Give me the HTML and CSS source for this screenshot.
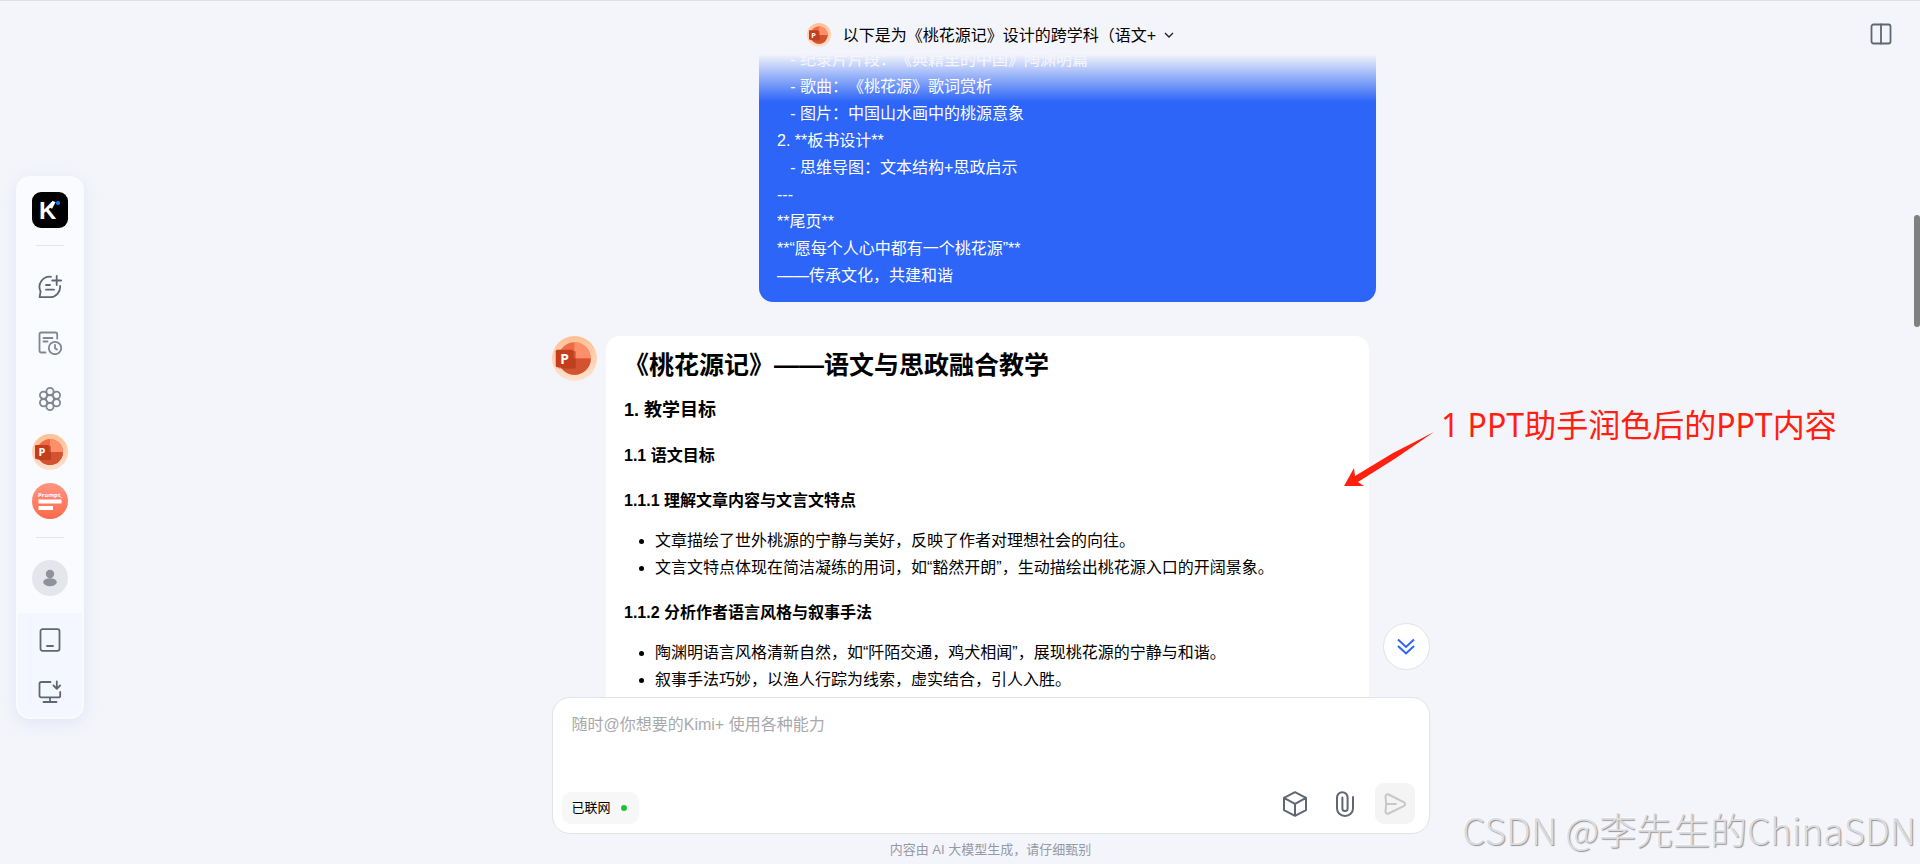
FILE: index.html
```html
<!DOCTYPE html>
<html lang="zh-CN">
<head>
    <meta charset="UTF-8">
    <title>Kimi</title>
    <link rel="stylesheet" href="styles.css">
</head>
<body>
    <svg class="defs" width="0" height="0" aria-hidden="true">
        <defs>
            <linearGradient id="peach" x1="0" y1="0" x2="0" y2="1">
                <stop offset="0" stop-color="#ffc092"/>
                <stop offset="1" stop-color="#ffe2cf"/>
            </linearGradient>
            <linearGradient id="coral" x1="0" y1="0" x2="0" y2="1">
                <stop offset="0" stop-color="#ff9580"/>
                <stop offset="1" stop-color="#ff6a4b"/>
            </linearGradient>
            <symbol id="ppt" viewBox="0 0 36 36">
                <circle cx="18" cy="18" r="18" fill="url(#peach)"/>
                <circle cx="18" cy="18" r="13" fill="#ed6c47"/>
                <path d="M18 5a13 13 0 0 1 13 13H18z" fill="#ff8f6b"/>
                <path d="M5 18h26a13 13 0 0 1-26 0z" fill="#d35230"/>
                <rect x="5" y="12" width="14" height="14" rx="1" fill="#9e3017" opacity=".5"/>
                <rect x="3" y="11" width="14" height="14" rx="1.2" fill="#c43e1c"/>
                <text x="10" y="22" class="ppt-letter">P</text>
            </symbol>
        </defs>
    </svg>

    <nav class="sidebar">
        <a href="#" class="item logo" aria-label="Kimi">
            <svg width="36" height="36" viewBox="0 0 36 36">
                <rect width="36" height="36" rx="9"/>
                <text x="7" y="27" class="logo-letter">K</text>
                <path d="M22 8h9v7h-9z"/>
                <path d="M18.500 16l3.500-6.500" stroke="#fff" stroke-width="3.500"/>
                <rect x="24" y="9" width="4" height="4" rx="1.800" fill="#0a7cff"/>
            </svg>
        </a>
        <hr>
        <button class="item icon" aria-label="新建会话">
            <svg width="24" height="24" viewBox="0 0 24 24">
                <path d="M13 1.800A10.200 10.200 0 0 0 2.600 16.500L1.600 22.200H12A10.200 10.200 0 0 0 22.100 11M18.700 1v9M14.200 5.500h9M8 10h4M8 14.700h8"/>
            </svg>
        </button>
        <button class="item icon light" aria-label="历史会话">
            <svg width="24" height="24" viewBox="0 0 24 24">
                <path d="M7.500 21.500H3.200a1.700 1.700 0 0 1-1.700-1.700V3.200A1.700 1.700 0 0 1 3.200 1.500h14.300a1.700 1.700 0 0 1 1.700 1.700V7.500M5.500 7h9M5.500 10.500h4"/>
                <circle cx="17" cy="17" r="6.200"/>
                <path d="M17 13.800V17.200l2 1.400"/>
            </svg>
        </button>
        <button class="item icon light" aria-label="Kimi+">
            <svg width="24" height="24" viewBox="0 0 24 24">
                <circle cx="12" cy="12" r="3.900"/>
                <circle cx="12" cy="4.500" r="3.600"/>
                <circle cx="18.500" cy="8.200" r="3.600"/>
                <circle cx="18.500" cy="15.800" r="3.600"/>
                <circle cx="12" cy="19.500" r="3.600"/>
                <circle cx="5.500" cy="15.800" r="3.600"/>
                <circle cx="5.500" cy="8.200" r="3.600"/>
            </svg>
        </button>
        <a href="#" class="item round" aria-label="PPT助手"><svg width="36" height="36"><use href="#ppt"/></svg></a>
        <a href="#" class="item round" aria-label="提示词专家">
            <svg width="36" height="36" viewBox="0 0 36 36">
                <circle cx="18" cy="18" r="18" fill="url(#coral)"/>
                <text x="6" y="14" class="prompt-word">Prompt_</text>
                <path d="M6.500 16.500h23v4h-23zM6.500 23h14.500v4H6.500z" fill="#fff"/>
            </svg>
        </a>
        <hr class="second">
        <button class="item user" aria-label="用户">
            <svg width="36" height="36" viewBox="0 0 36 36">
                <circle cx="18" cy="18" r="18" fill="#e5e6eb"/>
                <circle cx="18" cy="14" r="4.200" fill="#8f919b"/>
                <ellipse cx="18" cy="22.200" rx="6.700" ry="4" fill="#8f919b"/>
            </svg>
        </button>
        <div class="downloads">
            <button class="item icon" aria-label="手机应用">
                <svg width="24" height="24" viewBox="0 0 24 24">
                    <rect x="2.500" y="1.200" width="19" height="21.600" rx="2"/>
                    <path d="M9 18h6"/>
                </svg>
            </button>
            <button class="item icon" aria-label="桌面应用">
                <svg width="24" height="24" viewBox="0 0 24 24">
                    <path d="M12.500 2H3.200A1.700 1.700 0 0 0 1.500 3.700v12a1.700 1.700 0 0 0 1.700 1.700h17.300a1.700 1.700 0 0 0 1.700-1.700V12M12 17.500V22M5.500 22h13M18.800 1.500v7M15.500 5.500l3.300 3.300 3.300-3.300"/>
                </svg>
            </button>
        </div>
    </nav>

    <div class="main">
        <header class="topbar">
            <button class="title">
                <svg width="24" height="24"><use href="#ppt"/></svg>
                <span>以下是为《桃花源记》设计的跨学科（语文+</span>
                <svg width="10" height="10" viewBox="0 0 10 10" class="chevron"><path d="M1 3l4 4 4-4"/></svg>
            </button>
            <button class="panel icon" aria-label="侧边栏">
                <svg width="22" height="22" viewBox="0 0 22 22">
                    <rect x="1.500" y="1.500" width="19" height="19" rx="2"/>
                    <path d="M11 1.500v19"/>
                </svg>
            </button>
        </header>

        <main class="chat">
            <div class="messages">
                <div class="bubble">   - 纪录片片段：《典籍里的中国》陶渊明篇
   - 歌曲：《桃花源》歌词赏析
   - 图片：中国山水画中的桃源意象
2. **板书设计**
   - 思维导图：文本结构+思政启示
---
**尾页**
**“愿每个人心中都有一个桃花源”**
——传承文化，共建和谐</div>
                <div class="reply">
                    <svg class="avatar" width="45" height="45"><use href="#ppt"/></svg>
                    <article class="card">
                        <h1>《桃花源记》——语文与思政融合教学</h1>
                        <h2>1. 教学目标</h2>
                        <h3>1.1 语文目标</h3>
                        <h4>1.1.1 理解文章内容与文言文特点</h4>
                        <ul>
                            <li>文章描绘了世外桃源的宁静与美好，反映了作者对理想社会的向往。</li>
                            <li>文言文特点体现在简洁凝练的用词，如“豁然开朗”，生动描绘出桃花源入口的开阔景象。</li>
                        </ul>
                        <h4>1.1.2 分析作者语言风格与叙事手法</h4>
                        <ul>
                            <li>陶渊明语言风格清新自然，如“阡陌交通，鸡犬相闻”，展现桃花源的宁静与和谐。</li>
                            <li>叙事手法巧妙，以渔人行踪为线索，虚实结合，引人入胜。</li>
                        </ul>
                    </article>
                </div>
            </div>
        </main>

        <div class="bottom">
            <button class="to-bottom" aria-label="回到底部">
                <svg width="20" height="20" viewBox="0 0 20 20"><path d="M2 2.500l8 7.500 8-7.500M2 9l8 7.500L18 9"/></svg>
            </button>
            <form class="composer">
                <textarea rows="2" aria-label="输入消息" placeholder="随时@你想要的Kimi+ 使用各种能力"></textarea>
                <div class="tools">
                    <button type="button" class="online">已联网<i></i></button>
                    <button type="button" class="icon tool" aria-label="工具箱">
                        <svg width="26" height="26" viewBox="0 0 26 26">
                            <path d="M13 1.200L24 6.800v12.400L13 24.800 2 19.200V6.800zM2 6.800l11 6 11-6M13 12.800v12"/>
                        </svg>
                    </button>
                    <button type="button" class="icon tool" aria-label="附件">
                        <svg width="26" height="26" viewBox="0 0 26 26">
                            <path d="M21 6v11.500a8 7.500 0 0 1-16 0V6.500a5.300 5.300 0 0 1 10.600 0V17.500a2.600 2.600 0 0 1-5.200 0V6.500"/>
                        </svg>
                    </button>
                    <button class="send" aria-label="发送" disabled>
                        <svg width="24" height="24" viewBox="0 0 24 24">
                            <path d="M2.500 4.500a2.200 2.200 0 0 1 3.100-2l15.500 7.800a2 2 0 0 1 0 3.500L5.600 21.500a2.200 2.200 0 0 1-3.100-2Q3.800 12 2.500 4.500zM3.500 12H13"/>
                        </svg>
                    </button>
                </div>
            </form>
            <p class="notice">内容由 AI 大模型生成，请仔细甄别</p>
        </div>
    </div>

    <div class="note">
        <svg width="90" height="55" viewBox="0 0 90 55"><path d="M90 0L52 26 14 50l6 4H0L10 36l1 8L49 21z"/></svg>
        <span>1 PPT助手润色后的PPT内容</span>
    </div>
    <div class="scrollbar"></div>
    <div class="watermark">CSDN @李先生的ChinaSDN</div>
</body>
</html>
```

FILE: styles.css
```css
*{
    margin: 0;
    padding: 0;
    box-sizing: border-box;
}
body{
    display: flex;
    height: 100vh;
    overflow: hidden;
    position: relative;
    border-top: 1px solid #e0e0e2;
    background: #f4f5fa;
    color: #000;
    font: 16px/27px "Liberation Sans", "Noto Sans CJK SC", sans-serif;
    text-spacing-trim: space-all;
}
button{
    border: none;
    background: none;
    font: inherit;
    color: inherit;
    cursor: pointer;
}
svg{
    display: block;
    flex: none;
}
.defs{
    position: absolute;
}
.icon svg{
    fill: none;
    stroke: #5f6773;
    stroke-width: 1.8;
    stroke-linecap: round;
    stroke-linejoin: round;
}
.icon.light svg{
    stroke: #818792;
}

/* sidebar */
.sidebar{
    display: flex;
    flex-direction: column;
    align-items: center;
    align-self: center;
    flex: none;
    width: 68px;
    margin: 30px 0 0 16px;
    padding-top: 16px;
    border-radius: 14px;
    background: #fafbff;
    box-shadow: 0 4px 16px rgba(90, 120, 220, .12);
}
.item{
    display: flex;
    align-items: center;
    justify-content: center;
    width: 36px;
    height: 36px;
}
.sidebar hr{
    width: 28px;
    height: 1px;
    margin: 17px 0 23px;
    border: none;
    background: #e4e5ea;
}
.sidebar .icon{
    margin-bottom: 20px;
}
.sidebar .light + .round{
    margin-top: -3px;
}
.sidebar .round{
    margin-bottom: 13px;
}
.sidebar .second{
    margin: 5px 0 22px;
}
.downloads{
    display: flex;
    flex-direction: column;
    align-items: center;
    align-self: stretch;
    gap: 16px;
    margin: 17px 2px 2px;
    padding: 9px 0 7px;
    border-radius: 0 0 12px 12px;
    background: #f4f7ff;
}
.downloads .icon{
    margin: 0;
}
.ppt-letter{
    font: bold 11px "Open Sans", sans-serif;
    fill: #fff;
    text-anchor: middle;
}
.logo-letter{
    font: bold 24px "Liberation Sans", sans-serif;
    fill: #fff;
}
.prompt-word{
    font: bold 6px "Open Sans", sans-serif;
    fill: #fff;
}

/* main column */
.main{
    display: flex;
    flex-direction: column;
    flex: 1;
    min-width: 0;
    padding-right: 23px;
}
.topbar{
    display: flex;
    align-items: center;
    justify-content: center;
    flex: none;
    height: 53px;
    padding-top: 14px;
    position: relative;
    z-index: 1;
}
.topbar:after{
    content: "";
    position: absolute;
    top: 100%;
    left: 0;
    right: 0;
    height: 48px;
    background: linear-gradient(#f4f5fa, rgba(244, 245, 250, 0));
}
.title{
    display: flex;
    align-items: center;
    gap: 8px;
}
.title span{
    margin-left: 4px;
    padding-top: 2px;
}
.chevron{
    fill: none;
    stroke: #222;
    stroke-width: 1.4;
}
.panel{
    position: absolute;
    right: 5px;
    top: 22px;
}
.chat{
    flex: 1;
    min-height: 0;
    overflow: hidden;
}
.messages{
    width: 100%;
    max-width: 877px;
    margin: -8px auto 0;
}
.bubble{
    width: 617px;
    max-width: 90%;
    margin: 0 53px 34px auto;
    padding: 0 18px 13px;
    border-radius: 0 0 14px 14px;
    background: #2d65f8;
    color: #fff;
    white-space: pre-wrap;
}
.reply{
    display: flex;
    align-items: flex-start;
    gap: 9px;
    padding-right: 60px;
}
.card{
    flex: 1;
    padding: 11px 18px 40px;
    border-radius: 14px 14px 0 0;
    background: #fff;
}
.card h1{
    margin-bottom: 14px;
    font-size: 25px;
    line-height: 36px;
}
.card h2{
    margin-bottom: 18px;
    font-size: 18px;
}
.card h3{
    margin-bottom: 18px;
    font-size: 16px;
}
.card h4{
    margin-bottom: 13px;
    font-size: 16px;
}
.card ul{
    margin-bottom: 18px;
    padding-left: 31px;
}

/* composer */
.bottom{
    flex: none;
    width: 100%;
    max-width: 878px;
    margin: 0 auto;
    position: relative;
}
.to-bottom{
    display: flex;
    align-items: center;
    justify-content: center;
    position: absolute;
    right: 0;
    bottom: 100%;
    width: 47px;
    height: 47px;
    margin-bottom: 27px;
    border: 1px solid #e2e3e6;
    border-radius: 50%;
    background: #fff;
}
.to-bottom svg{
    fill: none;
    stroke: #2d65f8;
    stroke-width: 2;
}
.composer{
    padding: 13px 14px 9px 9px;
    border: 1px solid #e2e3e6;
    border-radius: 18px;
    background: #fff;
}
.composer textarea{
    display: block;
    width: 100%;
    height: 72px;
    padding: 0 10px;
    border: none;
    outline: none;
    resize: none;
    background: none;
    font: inherit;
}
.composer textarea::placeholder{
    color: #a9a9ab;
    opacity: 1;
}
.tools{
    display: flex;
    align-items: center;
    gap: 24px;
}
.online{
    display: flex;
    align-items: center;
    gap: 10px;
    height: 32px;
    margin: 8px auto 0 0;
    padding: 0 12px 0 10px;
    border-radius: 9px;
    background: #f7f7f7;
    font-size: 13px;
}
.online i{
    width: 6px;
    height: 6px;
    border-radius: 50%;
    background: #1ec337;
}
.tool svg{
    stroke-width: 2;
}
.send{
    display: flex;
    align-items: center;
    justify-content: center;
    width: 40px;
    height: 41px;
    margin-left: -7px;
    border-radius: 9px;
    background: #f4f4f4;
}
.send svg{
    fill: none;
    stroke: #c6c7c9;
    stroke-width: 2;
    stroke-linecap: round;
}
.notice{
    height: 30px;
    color: #949aa5;
    font-size: 13px;
    line-height: 32px;
    text-align: center;
}

/* overlays */
.note{
    display: flex;
    align-items: flex-start;
    gap: 7px;
    position: absolute;
    left: 70%;
    top: 404px;
    z-index: 2;
    color: #ff2010;
    font: 32px/40px "Noto Sans", "Noto Sans CJK SC", sans-serif;
    white-space: nowrap;
}
.note svg{
    margin-top: 27px;
    fill: #ff2010;
}
.scrollbar{
    position: absolute;
    right: 0;
    top: 214px;
    width: 6px;
    height: 112px;
    border-radius: 3px;
    background: #808080;
}
.watermark{
    position: absolute;
    right: 4px;
    bottom: 12px;
    color: #dcdde0;
    font: 300 37px/46px "Noto Sans CJK SC", sans-serif;
    text-shadow: 1px 1px 1px #909296, -1px -1px 0 #fafafc;
    white-space: nowrap;
}
```
